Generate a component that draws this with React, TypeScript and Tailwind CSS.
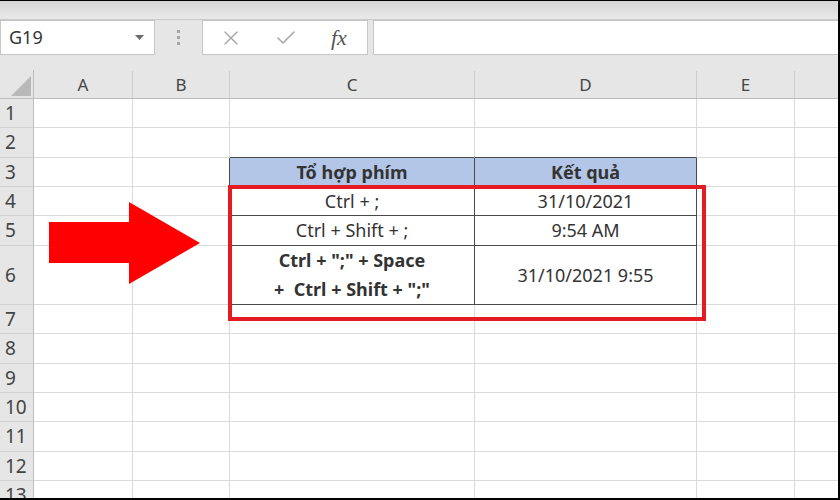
import { X, Check } from "lucide-react";

const COLS = ["A", "B", "C", "D", "E", ""];
const COL_W = ["w-[99px]", "w-[97px]", "w-[245px]", "w-[222px]", "w-[98px]", "flex-1"];

const ROWS = [
  { n: 1, h: "h-[29px]" },
  { n: 2, h: "h-[30px]" },
  { n: 3, h: "h-[29px]" },
  { n: 4, h: "h-[29px]" },
  { n: 5, h: "h-[30px]" },
  { n: 6, h: "h-[59px]" },
  { n: 7, h: "h-[29px]" },
  { n: 8, h: "h-[30px]" },
  { n: 9, h: "h-[29px]" },
  { n: 10, h: "h-[29px]" },
  { n: 11, h: "h-[30px]" },
  { n: 12, h: "h-[29px]" },
  { n: 13, h: "h-[30px]" },
];

function cellContent(r: number, c: number) {
  if (c === 2) {
    if (r === 3) return <span className="font-bold">Tổ hợp phím</span>;
    if (r === 4) return "Ctrl + ;";
    if (r === 5) return "Ctrl + Shift + ;";
    if (r === 6)
      return (
        <div className="font-bold leading-[29px] text-center">
          <div>Ctrl + ";" + Space</div>
          <div>+&nbsp; Ctrl + Shift + ";"</div>
        </div>
      );
  }
  if (c === 3) {
    if (r === 3) return <span className="font-bold">Kết quả</span>;
    if (r === 4) return "31/10/2021";
    if (r === 5) return "9:54 AM";
    if (r === 6) return "31/10/2021 9:55";
  }
  return null;
}

function Cell({ r, c }: { r: number; c: number }) {
  const inTable = r >= 3 && r <= 6;
  const rightDark = inTable && c >= 1 && c <= 3;
  const bottomDark = r >= 2 && r <= 6 && (c === 2 || c === 3);
  const head = r === 3 && (c === 2 || c === 3);
  return (
    <div
      className={`${COL_W[c]} h-full border-r border-b flex items-center justify-center text-[18px] text-[#333] ${
        rightDark ? "border-r-[#4a4a4a]" : "border-r-[#dadada]"
      } ${bottomDark ? "border-b-[#4a4a4a]" : "border-b-[#dadada]"} ${head ? "bg-[#b4c6e7]" : "bg-white"}`}
    >
      {cellContent(r, c)}
    </div>
  );
}

export default function App() {
  return (
    <div className="relative w-[840px] h-[500px] overflow-hidden bg-[#e6e6e6] font-['Noto_Sans',sans-serif]">
      {/* ribbon edge */}
      <div className="h-[20px] bg-gradient-to-b from-[#d4d4d4] to-[#e9e9e9] border-b border-[#c9c9c9]" />

      {/* formula bar */}
      <div className="h-[35px] flex items-stretch">
        <div className="w-[155px] bg-white border border-[#c6c6c6] flex items-center justify-between pl-[8px] pr-[10px]">
          <span className="text-[18px] text-[#333]">G19</span>
          <svg width="9" height="5" viewBox="0 0 9 5">
            <polygon points="0,0 9,0 4.5,5" fill="#6b6b6b" />
          </svg>
        </div>
        <div className="w-[47px] flex flex-col items-center justify-center gap-[3px]">
          <div className="w-[3px] h-[3px] bg-[#a5a5a5]" />
          <div className="w-[3px] h-[3px] bg-[#a5a5a5]" />
          <div className="w-[3px] h-[3px] bg-[#a5a5a5]" />
        </div>
        <div className="w-[166px] bg-white border border-[#c6c6c6] flex items-center pl-[16px]">
          <X className="w-[24px] h-[24px] text-[#a8a8a8]" strokeWidth={1.4} />
          <Check className="w-[24px] h-[24px] text-[#a8a8a8] ml-[31px]" strokeWidth={1.6} />
          <span className="ml-[33px] text-[22px] italic text-[#555] font-['Liberation_Serif',serif]">fx</span>
        </div>
        <div className="flex-1 ml-[5px] bg-white border border-[#c6c6c6]" />
      </div>

      {/* column headers */}
      <div className="h-[44px] flex items-end border-b border-[#bdbdbd]">
        <div className="w-[34px] h-[28px] border-r border-[#bdbdbd] flex items-end justify-end pr-[2px] pb-[2px]">
          <svg width="20" height="20" viewBox="0 0 20 20">
            <polygon points="20,0 20,20 0,20" fill="#b9b9b9" />
          </svg>
        </div>
        {COLS.map((c, i) => (
          <div
            key={i}
            className={`${COL_W[i]} h-[27px] border-r border-[#cdcdcd] flex items-center justify-center text-[17px] text-[#444]`}
          >
            {c}
          </div>
        ))}
      </div>

      {/* grid */}
      {ROWS.map((row) => (
        <div key={row.n} className={`${row.h} flex`}>
          <div className="w-[34px] h-full bg-[#e6e6e6] border-r border-r-[#bdbdbd] border-b border-b-[#d2d2d2] flex items-center pl-[5px] text-[19px] text-[#444]">
            {row.n}
          </div>
          {COLS.map((_, c) => (
            <Cell key={c} r={row.n} c={c} />
          ))}
        </div>
      ))}

      {/* red highlight box */}
      <div className="absolute left-[228px] top-[185px] w-[478px] h-[136px] border-[4px] border-[#e51b24]" />

      {/* red arrow */}
      <svg className="absolute left-0 top-0" width="840" height="500" viewBox="0 0 840 500">
        <polygon points="49,222 129,222 129,202 200,243 129,284 129,263 49,263" fill="#ff0000" />
      </svg>

      {/* screenshot frame */}
      <div className="absolute inset-0 border-t border-r-2 border-b-2 border-black pointer-events-none" />
    </div>
  );
}
